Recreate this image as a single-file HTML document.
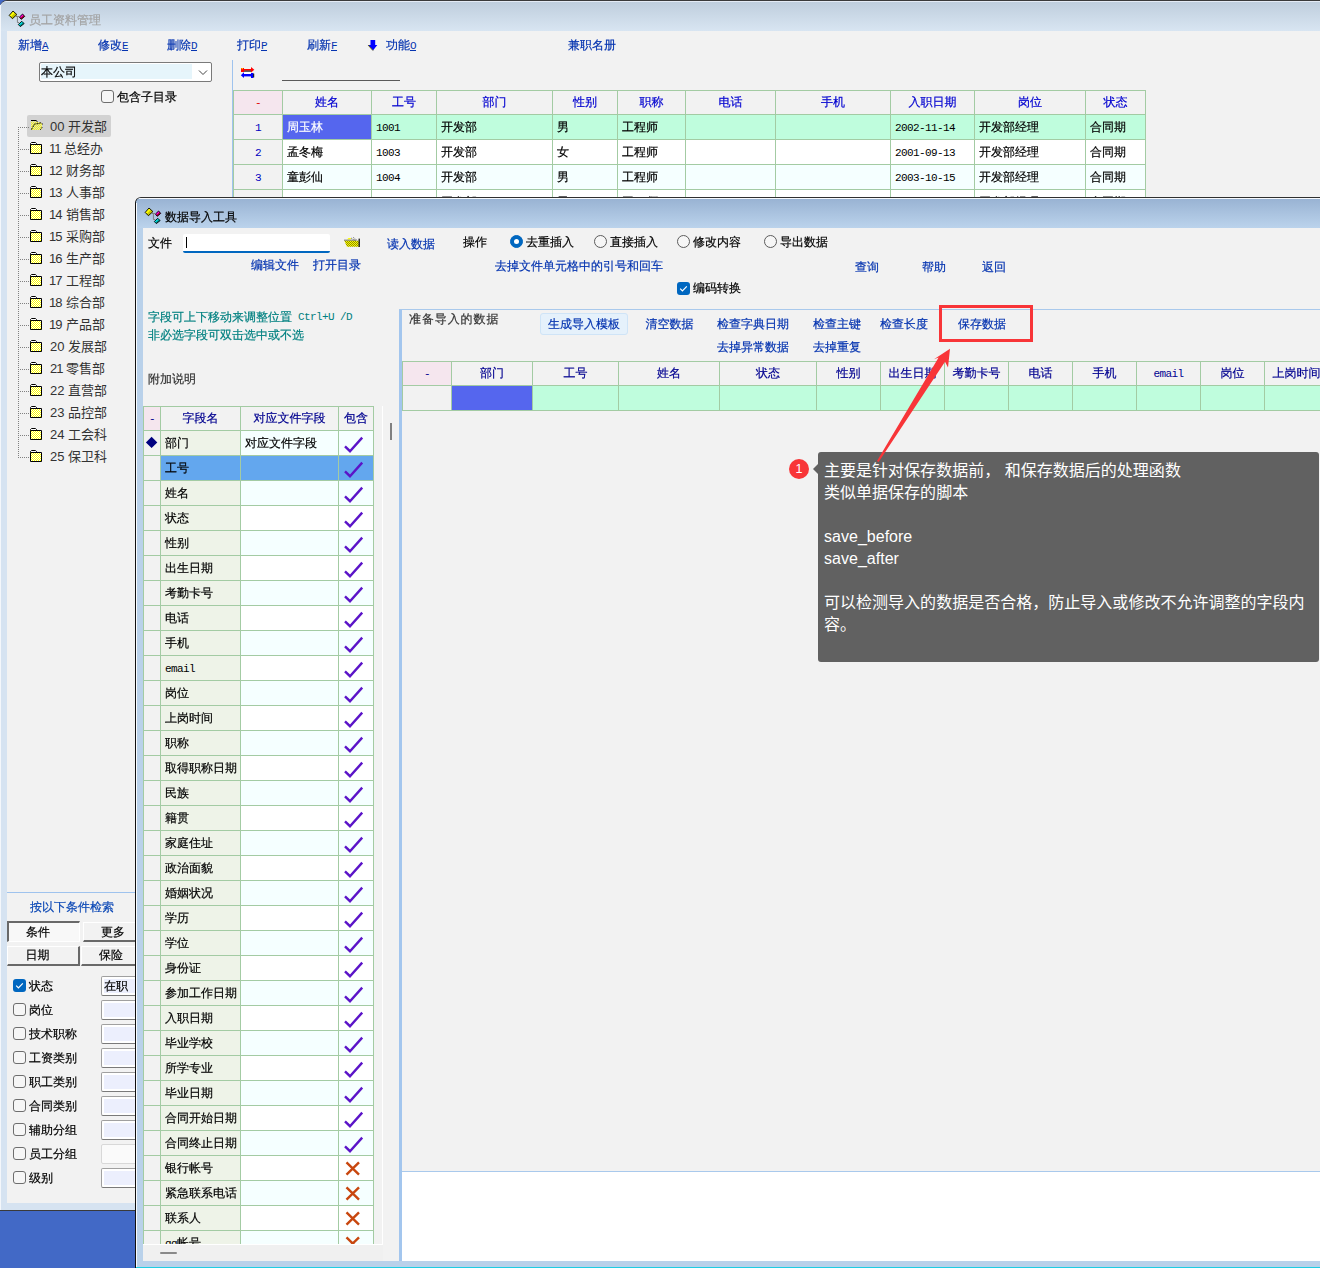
<!DOCTYPE html>
<html lang="zh-CN"><head><meta charset="utf-8"><title>员工资料管理</title>
<style>
html,body{margin:0;padding:0}
body{width:1320px;height:1268px;overflow:hidden;position:relative;background:#4269c6;font:12px/14px 'Liberation Sans','WenQuanYi Zen Hei',sans-serif;color:#000}
.b{position:absolute;box-sizing:border-box}
.t{position:absolute;white-space:nowrap;font:12px/14px 'Liberation Sans','WenQuanYi Zen Hei',sans-serif;-webkit-text-stroke:.2px}
.y{position:absolute;white-space:nowrap;font:13px/16px 'Liberation Sans','Noto Sans CJK SC',sans-serif;color:#333}
.n{position:absolute;white-space:nowrap;font:12px/14px 'Liberation Sans','Noto Sans CJK SC',sans-serif}
.o{margin-left:-1px;letter-spacing:-1px}
u{text-decoration:underline}
i{font:normal 11px 'Liberation Mono',monospace;letter-spacing:-.6px;position:relative;top:-.5px;-webkit-text-stroke:0}
.g{position:absolute;box-sizing:border-box;border-right:1px solid #a3cba3;border-bottom:1px solid #a3cba3;white-space:nowrap;overflow:hidden;font:12px/14px 'Liberation Sans','WenQuanYi Zen Hei',sans-serif;-webkit-text-stroke:.2px}
.g span{position:absolute;left:4px;top:5px}
.g.c{text-align:center}
.g.c span{position:static;display:block;margin-top:4px}
.cb{position:absolute;box-sizing:border-box;width:13px;height:13px;border:1px solid #6e6e6e;border-radius:3px;background:#f6f6f6}
.cbk{position:absolute;box-sizing:border-box;width:13px;height:13px;border-radius:3px;background:#0067c0}
.rd{position:absolute;box-sizing:border-box;width:13px;height:13px;border:1px solid #5c5c5c;border-radius:50%;background:#f6f6f6}
.inp{position:absolute;box-sizing:border-box;height:20px;border:1px solid #a0a0a0;border-bottom-color:#7a7a7a;border-radius:2px;background:#fff}
.inp b{position:absolute;left:2px;top:2px;right:0;bottom:2px;background:#eceffd}
</style></head><body>

<div class="b" id="win1" style="left:0;top:0;width:1400px;height:1211px;background:#d6e3f1;border-top:1px solid #3a3a3a;border-bottom:1px solid #3a3a3a;border-top-left-radius:7px"></div>
<div class="b" style="left:1px;top:1px;width:1400px;height:30px;background:linear-gradient(#e4ebf5 0,#e4ebf5 1px,#bfcedd 1px,#d8e5f2 100%);border-top-left-radius:6px"></div>
<div class="b" style="left:0px;top:5px;width:1px;height:1205px;background:#f4f7fb"></div>
<div class="b" id="client1" style="left:7px;top:31px;width:1400px;height:1172px;background:#f2f2f2"></div>
<svg class="b" style="left:8px;top:10px" width="18" height="18" viewBox="0 0 18 18"><path d="M8 6.5H11.4M9.4 6.5V12.5H11" fill="none" stroke="#808080" stroke-width="1"/><path d="M5 1L8.9 4.6L4.4 8.7L1.2 5.4Z" fill="#ffff00"/><path d="M6.95 2.8L8.9 4.6L4.4 8.7L2.8 7.05Z" fill="#c4c400"/><path d="M5 1L8.9 4.6L4.4 8.7L1.2 5.4Z" fill="none" stroke="#000" stroke-width=".9"/><path d="M14.6 4L16.7 6.4L13.2 9.3L11.5 7Z" fill="#ff00e0"/><path d="M15.65 5.2L16.7 6.4L13.2 9.3L12.35 8.15Z" fill="#b00020"/><path d="M14.6 4L16.7 6.4L13.2 9.3L11.5 7Z" fill="none" stroke="#000" stroke-width=".9"/><path d="M13.8 11.3L16.1 13.6L12.3 16.6L10.3 14.5Z" fill="#00e8e8"/><path d="M14.95 12.45L16.1 13.6L12.3 16.6L11.3 15.55Z" fill="#008888"/><path d="M13.8 11.3L16.1 13.6L12.3 16.6L10.3 14.5Z" fill="none" stroke="#000" stroke-width=".9"/></svg>
<div class="t" style="left:29px;top:12.5px;color:#a3a3a3;">员工资料管理</div>
<div class="t" style="left:18px;top:38px;color:#0534b0;">新增<u><i>A</i></u></div>
<div class="t" style="left:98px;top:38px;color:#0534b0;">修改<u><i>E</i></u></div>
<div class="t" style="left:167px;top:38px;color:#0534b0;">删除<u><i>D</i></u></div>
<div class="t" style="left:237px;top:38px;color:#0534b0;">打印<u><i>P</i></u></div>
<div class="t" style="left:307px;top:38px;color:#0534b0;">刷新<u><i>F</i></u></div>
<div class="t" style="left:386px;top:38px;color:#0534b0;">功能<u><i>O</i></u></div>
<div class="t" style="left:568px;top:38px;color:#0534b0;">兼职名册</div>
<svg class="b" style="left:367px;top:39px" width="12" height="13" viewBox="0 0 12 13"><path d="M3.5 1H8.2V6H10.3L6 11.6L1 6H3.5Z" fill="#0000ff"/><path d="M1 6L6 11.6" stroke="#60601a" stroke-width="1" fill="none"/></svg>
<div class="b" style="left:39px;top:62px;width:173px;height:20px;background:#fff;border:1px solid #7a7a7a;border-radius:2px"></div>
<div class="b" style="left:41px;top:64px;width:151px;height:15px;background:#e6f5fb"></div>
<div class="t" style="left:41px;top:64.5px;color:#000;">本公司</div>
<svg class="b" style="left:198px;top:69px" width="10" height="7" viewBox="0 0 10 7"><path d="M1 1.5L5 5.5L9 1.5" fill="none" stroke="#444" stroke-width="1"/></svg>
<div class="cb" style="left:101px;top:90px"></div>
<div class="t" style="left:117px;top:90px;color:#000;">包含子目录</div>
<div class="b" style="left:232px;top:60px;width:1px;height:1143px;background:#9fc3ee"></div>
<svg class="b" style="left:240px;top:66px" width="16" height="13" viewBox="0 0 16 13"><rect x="1" y="2" width="3" height="4" fill="#f00"/><rect x="1.6" y="2" width="1.2" height="1.2" fill="#ff0"/><rect x="4" y="3" width="7" height="1.6" fill="#f00"/><rect x="4" y="4.6" width="7" height="1" fill="#000"/><path d="M11 1L14.3 3.8L11 6.5Z" fill="#f00"/><path d="M4 6.3L.8 9.2L4 12Z" fill="#00f"/><rect x="4" y="8" width="7" height="2.4" fill="#00f"/><rect x="11" y="7" width="2.4" height="5" fill="#00f"/><rect x="13.2" y="7.6" width="1" height="3.8" fill="#000"/><rect x="4.2" y="6.2" width="6.6" height="1.7" fill="#fff"/></svg>
<div class="b" style="left:282px;top:80px;width:118px;height:1px;background:#5a5a5a"></div>
<div class="b" style="left:233px;top:90px;width:913px;height:120px;background:#a3cba3"></div>
<div class="g c" style="left:234px;top:91px;width:49px;height:24px;background:#f5e6ee;color:#e00000"><span><i>-</i></span></div>
<div class="g c" style="left:283px;top:91px;width:89px;height:24px;background:#f2f2f2;color:#0000d0"><span>姓名</span></div>
<div class="g c" style="left:372px;top:91px;width:65px;height:24px;background:#f2f2f2;color:#0000d0"><span>工号</span></div>
<div class="g c" style="left:437px;top:91px;width:116px;height:24px;background:#f2f2f2;color:#0000d0"><span>部门</span></div>
<div class="g c" style="left:553px;top:91px;width:65px;height:24px;background:#f2f2f2;color:#0000d0"><span>性别</span></div>
<div class="g c" style="left:618px;top:91px;width:68px;height:24px;background:#f2f2f2;color:#0000d0"><span>职称</span></div>
<div class="g c" style="left:686px;top:91px;width:90px;height:24px;background:#f2f2f2;color:#0000d0"><span>电话</span></div>
<div class="g c" style="left:776px;top:91px;width:115px;height:24px;background:#f2f2f2;color:#0000d0"><span>手机</span></div>
<div class="g c" style="left:891px;top:91px;width:84px;height:24px;background:#f2f2f2;color:#0000d0"><span>入职日期</span></div>
<div class="g c" style="left:975px;top:91px;width:111px;height:24px;background:#f2f2f2;color:#0000d0"><span>岗位</span></div>
<div class="g c" style="left:1086px;top:91px;width:60px;height:24px;background:#f2f2f2;color:#0000d0"><span>状态</span></div>
<div class="g c" style="left:234px;top:115px;width:49px;height:25px;background:#f2f2f2;color:#0000c0"><span style="margin-top:5px"><i>1</i></span></div>
<div class="g" style="left:283px;top:115px;width:89px;height:25px;background:#5566ee;color:#fff"><span>周玉林</span></div>
<div class="g" style="left:372px;top:115px;width:65px;height:25px;background:#bffddd;color:#000"><span><i>1001</i></span></div>
<div class="g" style="left:437px;top:115px;width:116px;height:25px;background:#bffddd;color:#000"><span>开发部</span></div>
<div class="g" style="left:553px;top:115px;width:65px;height:25px;background:#bffddd;color:#000"><span>男</span></div>
<div class="g" style="left:618px;top:115px;width:68px;height:25px;background:#bffddd;color:#000"><span>工程师</span></div>
<div class="g" style="left:686px;top:115px;width:90px;height:25px;background:#bffddd;color:#000"><span></span></div>
<div class="g" style="left:776px;top:115px;width:115px;height:25px;background:#bffddd;color:#000"><span></span></div>
<div class="g" style="left:891px;top:115px;width:84px;height:25px;background:#bffddd;color:#000"><span><i>2002-11-14</i></span></div>
<div class="g" style="left:975px;top:115px;width:111px;height:25px;background:#bffddd;color:#000"><span>开发部经理</span></div>
<div class="g" style="left:1086px;top:115px;width:60px;height:25px;background:#bffddd;color:#000"><span>合同期</span></div>
<div class="g c" style="left:234px;top:140px;width:49px;height:25px;background:#f2f2f2;color:#0000c0"><span style="margin-top:5px"><i>2</i></span></div>
<div class="g" style="left:283px;top:140px;width:89px;height:25px;background:#fff;color:#000"><span>孟冬梅</span></div>
<div class="g" style="left:372px;top:140px;width:65px;height:25px;background:#fff;color:#000"><span><i>1003</i></span></div>
<div class="g" style="left:437px;top:140px;width:116px;height:25px;background:#fff;color:#000"><span>开发部</span></div>
<div class="g" style="left:553px;top:140px;width:65px;height:25px;background:#fff;color:#000"><span>女</span></div>
<div class="g" style="left:618px;top:140px;width:68px;height:25px;background:#fff;color:#000"><span>工程师</span></div>
<div class="g" style="left:686px;top:140px;width:90px;height:25px;background:#fff;color:#000"><span></span></div>
<div class="g" style="left:776px;top:140px;width:115px;height:25px;background:#fff;color:#000"><span></span></div>
<div class="g" style="left:891px;top:140px;width:84px;height:25px;background:#fff;color:#000"><span><i>2001-09-13</i></span></div>
<div class="g" style="left:975px;top:140px;width:111px;height:25px;background:#fff;color:#000"><span>开发部经理</span></div>
<div class="g" style="left:1086px;top:140px;width:60px;height:25px;background:#fff;color:#000"><span>合同期</span></div>
<div class="g c" style="left:234px;top:165px;width:49px;height:25px;background:#f2f2f2;color:#0000c0"><span style="margin-top:5px"><i>3</i></span></div>
<div class="g" style="left:283px;top:165px;width:89px;height:25px;background:#f5ffff;color:#000"><span>童彭仙</span></div>
<div class="g" style="left:372px;top:165px;width:65px;height:25px;background:#f5ffff;color:#000"><span><i>1004</i></span></div>
<div class="g" style="left:437px;top:165px;width:116px;height:25px;background:#f5ffff;color:#000"><span>开发部</span></div>
<div class="g" style="left:553px;top:165px;width:65px;height:25px;background:#f5ffff;color:#000"><span>男</span></div>
<div class="g" style="left:618px;top:165px;width:68px;height:25px;background:#f5ffff;color:#000"><span>工程师</span></div>
<div class="g" style="left:686px;top:165px;width:90px;height:25px;background:#f5ffff;color:#000"><span></span></div>
<div class="g" style="left:776px;top:165px;width:115px;height:25px;background:#f5ffff;color:#000"><span></span></div>
<div class="g" style="left:891px;top:165px;width:84px;height:25px;background:#f5ffff;color:#000"><span><i>2003-10-15</i></span></div>
<div class="g" style="left:975px;top:165px;width:111px;height:25px;background:#f5ffff;color:#000"><span>开发部经理</span></div>
<div class="g" style="left:1086px;top:165px;width:60px;height:25px;background:#f5ffff;color:#000"><span>合同期</span></div>
<div class="g c" style="left:234px;top:190px;width:49px;height:25px;background:#f2f2f2;color:#0000c0"><span style="margin-top:5px"></span></div>
<div class="g" style="left:283px;top:190px;width:89px;height:25px;background:#fff;color:#000"><span></span></div>
<div class="g" style="left:372px;top:190px;width:65px;height:25px;background:#fff;color:#000"><span></span></div>
<div class="g" style="left:437px;top:190px;width:116px;height:25px;background:#fff;color:#000"><span>开发部</span></div>
<div class="g" style="left:553px;top:190px;width:65px;height:25px;background:#fff;color:#000"><span>男</span></div>
<div class="g" style="left:618px;top:190px;width:68px;height:25px;background:#fff;color:#000"><span>工程师</span></div>
<div class="g" style="left:686px;top:190px;width:90px;height:25px;background:#fff;color:#000"><span></span></div>
<div class="g" style="left:776px;top:190px;width:115px;height:25px;background:#fff;color:#000"><span></span></div>
<div class="g" style="left:891px;top:190px;width:84px;height:25px;background:#fff;color:#000"><span></span></div>
<div class="g" style="left:975px;top:190px;width:111px;height:25px;background:#fff;color:#000"><span>开发部经理</span></div>
<div class="g" style="left:1086px;top:190px;width:60px;height:25px;background:#fff;color:#000"><span>合同期</span></div>
<svg class="b" width="0" height="0" style="left:0;top:0"><defs><pattern id="dy" width="2" height="2" patternUnits="userSpaceOnUse"><rect width="2" height="2" fill="#fff"/><rect width="1" height="1" fill="#ff0"/><rect x="1" y="1" width="1" height="1" fill="#ff0"/></pattern><pattern id="dg" width="2" height="2" patternUnits="userSpaceOnUse"><rect width="1" height="1" fill="#ff0"/><rect x="1" y="1" width="1" height="1" fill="#ff0"/></pattern></defs></svg>
<div class="b" style="left:27px;top:115px;width:84px;height:22px;background:#d2d2d2;border-radius:2px"></div>
<div class="b" style="left:18px;top:127px;width:1px;height:331px;border-left:1px dotted #808080"></div>
<div class="b" style="left:20px;top:127px;width:9px;height:1px;border-top:1px dotted #808080"></div>
<svg class="b" style="left:30px;top:119px" width="14" height="12" viewBox="0 0 14 12"><path d="M1 2.5H7L12 4V11H1Z" fill="url(#dg)"/><path d="M1 1.5H6L7.6 2.8" fill="none" stroke="#000" stroke-width="1"/><path d="M1.4 10.6L4.5 5L8.5 4.6L10.5 3.8L12.8 5.2" fill="none" stroke="#000" stroke-width="1" stroke-dasharray="2 .8"/><path d="M12.2 8.2L10.4 10.7" fill="none" stroke="#000" stroke-width="1" stroke-dasharray="1.2 .8"/></svg>
<div class="y" style="left:50px;top:119px">00 开发部</div>
<div class="b" style="left:20px;top:149px;width:9px;height:1px;border-top:1px dotted #808080"></div>
<svg class="b" style="left:30px;top:142px" width="12" height="12" viewBox="0 0 12 12"><path d="M.5 2.5V1.5L1.5 .5H5.5L6.5 1.5V2.5" fill="#fff" stroke="#000" stroke-width="1"/><path d="M.5 2.5H11.5V11.5H.5Z" fill="url(#dy)" stroke="#000" stroke-width="1"/></svg>
<div class="y" style="left:50px;top:141px"><span class="o">1</span><span class="o">1</span> 总经办</div>
<div class="b" style="left:20px;top:171px;width:9px;height:1px;border-top:1px dotted #808080"></div>
<svg class="b" style="left:30px;top:164px" width="12" height="12" viewBox="0 0 12 12"><path d="M.5 2.5V1.5L1.5 .5H5.5L6.5 1.5V2.5" fill="#fff" stroke="#000" stroke-width="1"/><path d="M.5 2.5H11.5V11.5H.5Z" fill="url(#dy)" stroke="#000" stroke-width="1"/></svg>
<div class="y" style="left:50px;top:163px"><span class="o">1</span>2 财务部</div>
<div class="b" style="left:20px;top:193px;width:9px;height:1px;border-top:1px dotted #808080"></div>
<svg class="b" style="left:30px;top:186px" width="12" height="12" viewBox="0 0 12 12"><path d="M.5 2.5V1.5L1.5 .5H5.5L6.5 1.5V2.5" fill="#fff" stroke="#000" stroke-width="1"/><path d="M.5 2.5H11.5V11.5H.5Z" fill="url(#dy)" stroke="#000" stroke-width="1"/></svg>
<div class="y" style="left:50px;top:185px"><span class="o">1</span>3 人事部</div>
<div class="b" style="left:20px;top:215px;width:9px;height:1px;border-top:1px dotted #808080"></div>
<svg class="b" style="left:30px;top:208px" width="12" height="12" viewBox="0 0 12 12"><path d="M.5 2.5V1.5L1.5 .5H5.5L6.5 1.5V2.5" fill="#fff" stroke="#000" stroke-width="1"/><path d="M.5 2.5H11.5V11.5H.5Z" fill="url(#dy)" stroke="#000" stroke-width="1"/></svg>
<div class="y" style="left:50px;top:207px"><span class="o">1</span>4 销售部</div>
<div class="b" style="left:20px;top:237px;width:9px;height:1px;border-top:1px dotted #808080"></div>
<svg class="b" style="left:30px;top:230px" width="12" height="12" viewBox="0 0 12 12"><path d="M.5 2.5V1.5L1.5 .5H5.5L6.5 1.5V2.5" fill="#fff" stroke="#000" stroke-width="1"/><path d="M.5 2.5H11.5V11.5H.5Z" fill="url(#dy)" stroke="#000" stroke-width="1"/></svg>
<div class="y" style="left:50px;top:229px"><span class="o">1</span>5 采购部</div>
<div class="b" style="left:20px;top:259px;width:9px;height:1px;border-top:1px dotted #808080"></div>
<svg class="b" style="left:30px;top:252px" width="12" height="12" viewBox="0 0 12 12"><path d="M.5 2.5V1.5L1.5 .5H5.5L6.5 1.5V2.5" fill="#fff" stroke="#000" stroke-width="1"/><path d="M.5 2.5H11.5V11.5H.5Z" fill="url(#dy)" stroke="#000" stroke-width="1"/></svg>
<div class="y" style="left:50px;top:251px"><span class="o">1</span>6 生产部</div>
<div class="b" style="left:20px;top:281px;width:9px;height:1px;border-top:1px dotted #808080"></div>
<svg class="b" style="left:30px;top:274px" width="12" height="12" viewBox="0 0 12 12"><path d="M.5 2.5V1.5L1.5 .5H5.5L6.5 1.5V2.5" fill="#fff" stroke="#000" stroke-width="1"/><path d="M.5 2.5H11.5V11.5H.5Z" fill="url(#dy)" stroke="#000" stroke-width="1"/></svg>
<div class="y" style="left:50px;top:273px"><span class="o">1</span>7 工程部</div>
<div class="b" style="left:20px;top:303px;width:9px;height:1px;border-top:1px dotted #808080"></div>
<svg class="b" style="left:30px;top:296px" width="12" height="12" viewBox="0 0 12 12"><path d="M.5 2.5V1.5L1.5 .5H5.5L6.5 1.5V2.5" fill="#fff" stroke="#000" stroke-width="1"/><path d="M.5 2.5H11.5V11.5H.5Z" fill="url(#dy)" stroke="#000" stroke-width="1"/></svg>
<div class="y" style="left:50px;top:295px"><span class="o">1</span>8 综合部</div>
<div class="b" style="left:20px;top:325px;width:9px;height:1px;border-top:1px dotted #808080"></div>
<svg class="b" style="left:30px;top:318px" width="12" height="12" viewBox="0 0 12 12"><path d="M.5 2.5V1.5L1.5 .5H5.5L6.5 1.5V2.5" fill="#fff" stroke="#000" stroke-width="1"/><path d="M.5 2.5H11.5V11.5H.5Z" fill="url(#dy)" stroke="#000" stroke-width="1"/></svg>
<div class="y" style="left:50px;top:317px"><span class="o">1</span>9 产品部</div>
<div class="b" style="left:20px;top:347px;width:9px;height:1px;border-top:1px dotted #808080"></div>
<svg class="b" style="left:30px;top:340px" width="12" height="12" viewBox="0 0 12 12"><path d="M.5 2.5V1.5L1.5 .5H5.5L6.5 1.5V2.5" fill="#fff" stroke="#000" stroke-width="1"/><path d="M.5 2.5H11.5V11.5H.5Z" fill="url(#dy)" stroke="#000" stroke-width="1"/></svg>
<div class="y" style="left:50px;top:339px">20 发展部</div>
<div class="b" style="left:20px;top:369px;width:9px;height:1px;border-top:1px dotted #808080"></div>
<svg class="b" style="left:30px;top:362px" width="12" height="12" viewBox="0 0 12 12"><path d="M.5 2.5V1.5L1.5 .5H5.5L6.5 1.5V2.5" fill="#fff" stroke="#000" stroke-width="1"/><path d="M.5 2.5H11.5V11.5H.5Z" fill="url(#dy)" stroke="#000" stroke-width="1"/></svg>
<div class="y" style="left:50px;top:361px">2<span class="o">1</span> 零售部</div>
<div class="b" style="left:20px;top:391px;width:9px;height:1px;border-top:1px dotted #808080"></div>
<svg class="b" style="left:30px;top:384px" width="12" height="12" viewBox="0 0 12 12"><path d="M.5 2.5V1.5L1.5 .5H5.5L6.5 1.5V2.5" fill="#fff" stroke="#000" stroke-width="1"/><path d="M.5 2.5H11.5V11.5H.5Z" fill="url(#dy)" stroke="#000" stroke-width="1"/></svg>
<div class="y" style="left:50px;top:383px">22 直营部</div>
<div class="b" style="left:20px;top:413px;width:9px;height:1px;border-top:1px dotted #808080"></div>
<svg class="b" style="left:30px;top:406px" width="12" height="12" viewBox="0 0 12 12"><path d="M.5 2.5V1.5L1.5 .5H5.5L6.5 1.5V2.5" fill="#fff" stroke="#000" stroke-width="1"/><path d="M.5 2.5H11.5V11.5H.5Z" fill="url(#dy)" stroke="#000" stroke-width="1"/></svg>
<div class="y" style="left:50px;top:405px">23 品控部</div>
<div class="b" style="left:20px;top:435px;width:9px;height:1px;border-top:1px dotted #808080"></div>
<svg class="b" style="left:30px;top:428px" width="12" height="12" viewBox="0 0 12 12"><path d="M.5 2.5V1.5L1.5 .5H5.5L6.5 1.5V2.5" fill="#fff" stroke="#000" stroke-width="1"/><path d="M.5 2.5H11.5V11.5H.5Z" fill="url(#dy)" stroke="#000" stroke-width="1"/></svg>
<div class="y" style="left:50px;top:427px">24 工会科</div>
<div class="b" style="left:20px;top:457px;width:9px;height:1px;border-top:1px dotted #808080"></div>
<svg class="b" style="left:30px;top:450px" width="12" height="12" viewBox="0 0 12 12"><path d="M.5 2.5V1.5L1.5 .5H5.5L6.5 1.5V2.5" fill="#fff" stroke="#000" stroke-width="1"/><path d="M.5 2.5H11.5V11.5H.5Z" fill="url(#dy)" stroke="#000" stroke-width="1"/></svg>
<div class="y" style="left:50px;top:449px">25 保卫科</div>
<div class="b" style="left:7px;top:892px;width:128px;height:1px;background:#9fc3ee"></div>
<div class="t" style="left:30px;top:900px;color:#0a47b5;">按以下条件检索</div>
<div class="b" style="left:7px;top:921px;width:73px;height:21px;background:#f8f8f8;border:1px solid #696969;border-right-color:#fff;border-bottom-color:#fff;border-left-width:2px;border-top-width:2px"></div>
<div class="b" style="left:83px;top:922px;width:60px;height:20px;background:#f2f2f2;border:1px solid #fff;border-right-color:#696969;border-bottom:2px solid #696969"></div>
<div class="b" style="left:7px;top:946px;width:73px;height:20px;background:#f2f2f2;border:1px solid #fff;border-right:2px solid #696969;border-bottom:2px solid #696969"></div>
<div class="b" style="left:81px;top:946px;width:62px;height:20px;background:#f2f2f2;border:1px solid #fff;border-right-color:#696969;border-bottom:2px solid #696969"></div>
<div class="t" style="left:26px;top:925px;color:#000;">条件</div>
<div class="t" style="left:101px;top:925px;color:#000;">更多</div>
<div class="t" style="left:25.5px;top:947.5px;color:#000;">日期</div>
<div class="t" style="left:99px;top:947.5px;color:#000;">保险</div>
<div class="cbk" style="left:13px;top:979px"><svg width="13" height="13" viewBox="0 0 13 13" style="display:block"><path d="M3.2 6.7L5.4 8.9L9.8 4.4" fill="none" stroke="#fff" stroke-width="1.2"/></svg></div>
<div class="t" style="left:29px;top:978.5px;color:#000;">状态</div>
<div class="inp" style="left:101px;top:975.5px;width:60px"><b></b></div>
<div class="t" style="left:104px;top:978.5px;color:#000;">在职</div>
<div class="cb" style="left:13px;top:1003px"></div>
<div class="t" style="left:29px;top:1002.5px;color:#000;">岗位</div>
<div class="inp" style="left:101px;top:999.5px;width:60px"><b></b></div>
<div class="cb" style="left:13px;top:1027px"></div>
<div class="t" style="left:29px;top:1026.5px;color:#000;">技术职称</div>
<div class="inp" style="left:101px;top:1023.5px;width:60px"><b></b></div>
<div class="cb" style="left:13px;top:1051px"></div>
<div class="t" style="left:29px;top:1050.5px;color:#000;">工资类别</div>
<div class="inp" style="left:101px;top:1047.5px;width:60px"><b></b></div>
<div class="cb" style="left:13px;top:1075px"></div>
<div class="t" style="left:29px;top:1074.5px;color:#000;">职工类别</div>
<div class="inp" style="left:101px;top:1071.5px;width:60px"><b></b></div>
<div class="cb" style="left:13px;top:1099px"></div>
<div class="t" style="left:29px;top:1098.5px;color:#000;">合同类别</div>
<div class="inp" style="left:101px;top:1095.5px;width:60px"><b></b></div>
<div class="cb" style="left:13px;top:1123px"></div>
<div class="t" style="left:29px;top:1122.5px;color:#000;">辅助分组</div>
<div class="inp" style="left:101px;top:1119.5px;width:60px"><b></b></div>
<div class="cb" style="left:13px;top:1147px"></div>
<div class="t" style="left:29px;top:1146.5px;color:#000;">员工分组</div>
<div class="inp" style="left:101px;top:1143.5px;width:60px;border-color:#d8d8d8;background:#fafafa"></div>
<div class="cb" style="left:13px;top:1171px"></div>
<div class="t" style="left:29px;top:1170.5px;color:#000;">级别</div>
<div class="inp" style="left:101px;top:1167.5px;width:60px"><b></b></div>
<div class="b" id="dlg" style="left:135px;top:197px;width:1300px;height:1080px;background:#b9d1ea;border-top:1px solid #303030;border-left:1px solid #101010;border-top-left-radius:6px"></div>
<div class="b" style="left:136px;top:198px;width:1300px;height:30px;background:linear-gradient(#f6f9fd 0,#f6f9fd 1px,#99b3d3 1px,#bbd3ec 100%);border-top-left-radius:5px"></div>
<div class="b" id="client2" style="left:143px;top:228px;width:1300px;height:1033px;background:#f2f2f2"></div>
<div class="b" style="left:136px;top:1267px;width:1300px;height:1px;background:#1fcde3"></div>
<div class="b" style="left:136px;top:203px;width:1px;height:1064px;background:#f8fbfe"></div>
<svg class="b" style="left:144px;top:207px" width="18" height="18" viewBox="0 0 18 18"><path d="M8 6.5H11.4M9.4 6.5V12.5H11" fill="none" stroke="#808080" stroke-width="1"/><path d="M5 1L8.9 4.6L4.4 8.7L1.2 5.4Z" fill="#ffff00"/><path d="M6.95 2.8L8.9 4.6L4.4 8.7L2.8 7.05Z" fill="#c4c400"/><path d="M5 1L8.9 4.6L4.4 8.7L1.2 5.4Z" fill="none" stroke="#000" stroke-width=".9"/><path d="M14.6 4L16.7 6.4L13.2 9.3L11.5 7Z" fill="#ff00e0"/><path d="M15.65 5.2L16.7 6.4L13.2 9.3L12.35 8.15Z" fill="#b00020"/><path d="M14.6 4L16.7 6.4L13.2 9.3L11.5 7Z" fill="none" stroke="#000" stroke-width=".9"/><path d="M13.8 11.3L16.1 13.6L12.3 16.6L10.3 14.5Z" fill="#00e8e8"/><path d="M14.95 12.45L16.1 13.6L12.3 16.6L11.3 15.55Z" fill="#008888"/><path d="M13.8 11.3L16.1 13.6L12.3 16.6L10.3 14.5Z" fill="none" stroke="#000" stroke-width=".9"/></svg>
<div class="t" style="left:165px;top:210px;color:#000;">数据导入工具</div>
<div class="t" style="left:148px;top:236px;color:#000;">文件</div>
<div class="b" style="left:183px;top:234px;width:147px;height:19px;background:#fff;border-bottom:2px solid #0067c0;border-radius:2px"></div>
<div class="b" style="left:186px;top:237px;width:1px;height:11px;background:#000"></div>
<svg class="b" style="left:343px;top:236px" width="18" height="12" viewBox="0 0 18 12"><path d="M4 3.5L5.5 2H8.5L7 3.5Z" fill="#ffff00"/><path d="M1 4.2H13" stroke="#666" stroke-width="1"/><defs><pattern id="dz" width="2" height="2" patternUnits="userSpaceOnUse"><rect width="2" height="2" fill="#8a8a00"/><rect width="1" height="1" fill="#ff0"/><rect x="1" y="1" width="1" height="1" fill="#ff0"/></pattern></defs><path d="M1.3 4.7H15.8V10.8H4Z" fill="url(#dz)"/><path d="M8 2L12.5 4.5M10 1.2L15 5" stroke="#555" stroke-width=".8" stroke-dasharray="1 1"/><rect x="15.6" y="2.6" width="1.2" height="8.4" fill="#000"/></svg>
<div class="t" style="left:387px;top:237px;color:#0534b0;">读入数据</div>
<div class="t" style="left:463px;top:235px;color:#000;">操作</div>
<div class="rd" style="left:510px;top:235px;background:#0067c0;border-color:#0067c0"><div class="b" style="left:3px;top:3px;width:5px;height:5px;border-radius:50%;background:#fff"></div></div>
<div class="t" style="left:526px;top:235px;color:#000;">去重插入</div>
<div class="rd" style="left:594px;top:235px"></div>
<div class="t" style="left:610px;top:235px;color:#000;">直接插入</div>
<div class="rd" style="left:677px;top:235px"></div>
<div class="t" style="left:693px;top:235px;color:#000;">修改内容</div>
<div class="rd" style="left:764px;top:235px"></div>
<div class="t" style="left:780px;top:235px;color:#000;">导出数据</div>
<div class="t" style="left:251px;top:258px;color:#0534b0;">编辑文件</div>
<div class="t" style="left:313px;top:258px;color:#0534b0;">打开目录</div>
<div class="t" style="left:495px;top:259px;color:#0534b0;">去掉文件单元格中的引号和回车</div>
<div class="t" style="left:855px;top:260px;color:#0534b0;">查询</div>
<div class="t" style="left:922px;top:260px;color:#0534b0;">帮助</div>
<div class="t" style="left:982px;top:260px;color:#0534b0;">返回</div>
<div class="cbk" style="left:677px;top:282px"><svg width="13" height="13" viewBox="0 0 13 13" style="display:block"><path d="M3.2 6.7L5.4 8.9L9.8 4.4" fill="none" stroke="#fff" stroke-width="1.2"/></svg></div>
<div class="t" style="left:693px;top:281px;color:#000;">编码转换</div>
<div class="t" style="left:148px;top:309.5px;color:#008080;">字段可上下移动来调整位置<i>&nbsp;Ctrl+U /D</i></div>
<div class="t" style="left:148px;top:327.5px;color:#008080;">非必选字段可双击选中或不选</div>
<div class="t" style="left:148px;top:372px;color:#333;">附加说明</div>
<div class="b" id="ltab" style="left:143px;top:406px;width:231px;height:838px;overflow:hidden;background:#a3cba3">
<div class="g c" style="left:1px;top:1px;width:17px;height:24px;background:#f5e6ee;color:#000090"><span><i>-</i></span></div>
<div class="g c" style="left:18px;top:1px;width:80px;height:24px;background:#f2f2f2;color:#000090"><span>字段名</span></div>
<div class="g c" style="left:98px;top:1px;width:98px;height:24px;background:#f2f2f2;color:#000090"><span>对应文件字段</span></div>
<div class="g c" style="left:196px;top:1px;width:35px;height:24px;background:#f2f2f2;color:#000090"><span>包含</span></div>
<div class="g" style="left:1px;top:25px;width:17px;height:25px;background:#f2f2f2"><svg width="16" height="24" viewBox="0 0 16 24" style="position:absolute;left:0;top:0"><path d="M7.6 5.7L13.3 11.4L7.6 17.1L1.9 11.4Z" fill="#000080"/></svg></div>
<div class="g" style="left:18px;top:25px;width:80px;height:25px;background:#eef3e8"><span>部门</span></div>
<div class="g" style="left:98px;top:25px;width:98px;height:25px;background:#f5ffff"><span>对应文件字段</span></div>
<div class="g" style="left:196px;top:25px;width:35px;height:25px;background:#f5ffff"><svg width="34" height="24" viewBox="0 0 34 24" style="position:absolute;left:0;top:0"><path d="M6 15.3L11 20.2L23.2 6.6" fill="none" stroke="#5b14c8" stroke-width="2.4"/></svg></div>
<div class="g" style="left:1px;top:50px;width:17px;height:25px;background:#f2f2f2"></div>
<div class="g" style="left:18px;top:50px;width:80px;height:25px;background:#63a7ee"><span>工号</span></div>
<div class="g" style="left:98px;top:50px;width:98px;height:25px;background:#63a7ee"><span></span></div>
<div class="g" style="left:196px;top:50px;width:35px;height:25px;background:#63a7ee"><svg width="34" height="24" viewBox="0 0 34 24" style="position:absolute;left:0;top:0"><path d="M6 15.3L11 20.2L23.2 6.6" fill="none" stroke="#5b14c8" stroke-width="2.4"/></svg></div>
<div class="g" style="left:1px;top:75px;width:17px;height:25px;background:#f2f2f2"></div>
<div class="g" style="left:18px;top:75px;width:80px;height:25px;background:#eef3e8"><span>姓名</span></div>
<div class="g" style="left:98px;top:75px;width:98px;height:25px;background:#f5ffff"><span></span></div>
<div class="g" style="left:196px;top:75px;width:35px;height:25px;background:#f5ffff"><svg width="34" height="24" viewBox="0 0 34 24" style="position:absolute;left:0;top:0"><path d="M6 15.3L11 20.2L23.2 6.6" fill="none" stroke="#5b14c8" stroke-width="2.4"/></svg></div>
<div class="g" style="left:1px;top:100px;width:17px;height:25px;background:#f2f2f2"></div>
<div class="g" style="left:18px;top:100px;width:80px;height:25px;background:#eef3e8"><span>状态</span></div>
<div class="g" style="left:98px;top:100px;width:98px;height:25px;background:#fff"><span></span></div>
<div class="g" style="left:196px;top:100px;width:35px;height:25px;background:#fff"><svg width="34" height="24" viewBox="0 0 34 24" style="position:absolute;left:0;top:0"><path d="M6 15.3L11 20.2L23.2 6.6" fill="none" stroke="#5b14c8" stroke-width="2.4"/></svg></div>
<div class="g" style="left:1px;top:125px;width:17px;height:25px;background:#f2f2f2"></div>
<div class="g" style="left:18px;top:125px;width:80px;height:25px;background:#eef3e8"><span>性别</span></div>
<div class="g" style="left:98px;top:125px;width:98px;height:25px;background:#f5ffff"><span></span></div>
<div class="g" style="left:196px;top:125px;width:35px;height:25px;background:#f5ffff"><svg width="34" height="24" viewBox="0 0 34 24" style="position:absolute;left:0;top:0"><path d="M6 15.3L11 20.2L23.2 6.6" fill="none" stroke="#5b14c8" stroke-width="2.4"/></svg></div>
<div class="g" style="left:1px;top:150px;width:17px;height:25px;background:#f2f2f2"></div>
<div class="g" style="left:18px;top:150px;width:80px;height:25px;background:#eef3e8"><span>出生日期</span></div>
<div class="g" style="left:98px;top:150px;width:98px;height:25px;background:#fff"><span></span></div>
<div class="g" style="left:196px;top:150px;width:35px;height:25px;background:#fff"><svg width="34" height="24" viewBox="0 0 34 24" style="position:absolute;left:0;top:0"><path d="M6 15.3L11 20.2L23.2 6.6" fill="none" stroke="#5b14c8" stroke-width="2.4"/></svg></div>
<div class="g" style="left:1px;top:175px;width:17px;height:25px;background:#f2f2f2"></div>
<div class="g" style="left:18px;top:175px;width:80px;height:25px;background:#eef3e8"><span>考勤卡号</span></div>
<div class="g" style="left:98px;top:175px;width:98px;height:25px;background:#f5ffff"><span></span></div>
<div class="g" style="left:196px;top:175px;width:35px;height:25px;background:#f5ffff"><svg width="34" height="24" viewBox="0 0 34 24" style="position:absolute;left:0;top:0"><path d="M6 15.3L11 20.2L23.2 6.6" fill="none" stroke="#5b14c8" stroke-width="2.4"/></svg></div>
<div class="g" style="left:1px;top:200px;width:17px;height:25px;background:#f2f2f2"></div>
<div class="g" style="left:18px;top:200px;width:80px;height:25px;background:#eef3e8"><span>电话</span></div>
<div class="g" style="left:98px;top:200px;width:98px;height:25px;background:#fff"><span></span></div>
<div class="g" style="left:196px;top:200px;width:35px;height:25px;background:#fff"><svg width="34" height="24" viewBox="0 0 34 24" style="position:absolute;left:0;top:0"><path d="M6 15.3L11 20.2L23.2 6.6" fill="none" stroke="#5b14c8" stroke-width="2.4"/></svg></div>
<div class="g" style="left:1px;top:225px;width:17px;height:25px;background:#f2f2f2"></div>
<div class="g" style="left:18px;top:225px;width:80px;height:25px;background:#eef3e8"><span>手机</span></div>
<div class="g" style="left:98px;top:225px;width:98px;height:25px;background:#f5ffff"><span></span></div>
<div class="g" style="left:196px;top:225px;width:35px;height:25px;background:#f5ffff"><svg width="34" height="24" viewBox="0 0 34 24" style="position:absolute;left:0;top:0"><path d="M6 15.3L11 20.2L23.2 6.6" fill="none" stroke="#5b14c8" stroke-width="2.4"/></svg></div>
<div class="g" style="left:1px;top:250px;width:17px;height:25px;background:#f2f2f2"></div>
<div class="g" style="left:18px;top:250px;width:80px;height:25px;background:#eef3e8"><span><i>email</i></span></div>
<div class="g" style="left:98px;top:250px;width:98px;height:25px;background:#fff"><span></span></div>
<div class="g" style="left:196px;top:250px;width:35px;height:25px;background:#fff"><svg width="34" height="24" viewBox="0 0 34 24" style="position:absolute;left:0;top:0"><path d="M6 15.3L11 20.2L23.2 6.6" fill="none" stroke="#5b14c8" stroke-width="2.4"/></svg></div>
<div class="g" style="left:1px;top:275px;width:17px;height:25px;background:#f2f2f2"></div>
<div class="g" style="left:18px;top:275px;width:80px;height:25px;background:#eef3e8"><span>岗位</span></div>
<div class="g" style="left:98px;top:275px;width:98px;height:25px;background:#f5ffff"><span></span></div>
<div class="g" style="left:196px;top:275px;width:35px;height:25px;background:#f5ffff"><svg width="34" height="24" viewBox="0 0 34 24" style="position:absolute;left:0;top:0"><path d="M6 15.3L11 20.2L23.2 6.6" fill="none" stroke="#5b14c8" stroke-width="2.4"/></svg></div>
<div class="g" style="left:1px;top:300px;width:17px;height:25px;background:#f2f2f2"></div>
<div class="g" style="left:18px;top:300px;width:80px;height:25px;background:#eef3e8"><span>上岗时间</span></div>
<div class="g" style="left:98px;top:300px;width:98px;height:25px;background:#fff"><span></span></div>
<div class="g" style="left:196px;top:300px;width:35px;height:25px;background:#fff"><svg width="34" height="24" viewBox="0 0 34 24" style="position:absolute;left:0;top:0"><path d="M6 15.3L11 20.2L23.2 6.6" fill="none" stroke="#5b14c8" stroke-width="2.4"/></svg></div>
<div class="g" style="left:1px;top:325px;width:17px;height:25px;background:#f2f2f2"></div>
<div class="g" style="left:18px;top:325px;width:80px;height:25px;background:#eef3e8"><span>职称</span></div>
<div class="g" style="left:98px;top:325px;width:98px;height:25px;background:#f5ffff"><span></span></div>
<div class="g" style="left:196px;top:325px;width:35px;height:25px;background:#f5ffff"><svg width="34" height="24" viewBox="0 0 34 24" style="position:absolute;left:0;top:0"><path d="M6 15.3L11 20.2L23.2 6.6" fill="none" stroke="#5b14c8" stroke-width="2.4"/></svg></div>
<div class="g" style="left:1px;top:350px;width:17px;height:25px;background:#f2f2f2"></div>
<div class="g" style="left:18px;top:350px;width:80px;height:25px;background:#eef3e8"><span>取得职称日期</span></div>
<div class="g" style="left:98px;top:350px;width:98px;height:25px;background:#fff"><span></span></div>
<div class="g" style="left:196px;top:350px;width:35px;height:25px;background:#fff"><svg width="34" height="24" viewBox="0 0 34 24" style="position:absolute;left:0;top:0"><path d="M6 15.3L11 20.2L23.2 6.6" fill="none" stroke="#5b14c8" stroke-width="2.4"/></svg></div>
<div class="g" style="left:1px;top:375px;width:17px;height:25px;background:#f2f2f2"></div>
<div class="g" style="left:18px;top:375px;width:80px;height:25px;background:#eef3e8"><span>民族</span></div>
<div class="g" style="left:98px;top:375px;width:98px;height:25px;background:#f5ffff"><span></span></div>
<div class="g" style="left:196px;top:375px;width:35px;height:25px;background:#f5ffff"><svg width="34" height="24" viewBox="0 0 34 24" style="position:absolute;left:0;top:0"><path d="M6 15.3L11 20.2L23.2 6.6" fill="none" stroke="#5b14c8" stroke-width="2.4"/></svg></div>
<div class="g" style="left:1px;top:400px;width:17px;height:25px;background:#f2f2f2"></div>
<div class="g" style="left:18px;top:400px;width:80px;height:25px;background:#eef3e8"><span>籍贯</span></div>
<div class="g" style="left:98px;top:400px;width:98px;height:25px;background:#fff"><span></span></div>
<div class="g" style="left:196px;top:400px;width:35px;height:25px;background:#fff"><svg width="34" height="24" viewBox="0 0 34 24" style="position:absolute;left:0;top:0"><path d="M6 15.3L11 20.2L23.2 6.6" fill="none" stroke="#5b14c8" stroke-width="2.4"/></svg></div>
<div class="g" style="left:1px;top:425px;width:17px;height:25px;background:#f2f2f2"></div>
<div class="g" style="left:18px;top:425px;width:80px;height:25px;background:#eef3e8"><span>家庭住址</span></div>
<div class="g" style="left:98px;top:425px;width:98px;height:25px;background:#f5ffff"><span></span></div>
<div class="g" style="left:196px;top:425px;width:35px;height:25px;background:#f5ffff"><svg width="34" height="24" viewBox="0 0 34 24" style="position:absolute;left:0;top:0"><path d="M6 15.3L11 20.2L23.2 6.6" fill="none" stroke="#5b14c8" stroke-width="2.4"/></svg></div>
<div class="g" style="left:1px;top:450px;width:17px;height:25px;background:#f2f2f2"></div>
<div class="g" style="left:18px;top:450px;width:80px;height:25px;background:#eef3e8"><span>政治面貌</span></div>
<div class="g" style="left:98px;top:450px;width:98px;height:25px;background:#fff"><span></span></div>
<div class="g" style="left:196px;top:450px;width:35px;height:25px;background:#fff"><svg width="34" height="24" viewBox="0 0 34 24" style="position:absolute;left:0;top:0"><path d="M6 15.3L11 20.2L23.2 6.6" fill="none" stroke="#5b14c8" stroke-width="2.4"/></svg></div>
<div class="g" style="left:1px;top:475px;width:17px;height:25px;background:#f2f2f2"></div>
<div class="g" style="left:18px;top:475px;width:80px;height:25px;background:#eef3e8"><span>婚姻状况</span></div>
<div class="g" style="left:98px;top:475px;width:98px;height:25px;background:#f5ffff"><span></span></div>
<div class="g" style="left:196px;top:475px;width:35px;height:25px;background:#f5ffff"><svg width="34" height="24" viewBox="0 0 34 24" style="position:absolute;left:0;top:0"><path d="M6 15.3L11 20.2L23.2 6.6" fill="none" stroke="#5b14c8" stroke-width="2.4"/></svg></div>
<div class="g" style="left:1px;top:500px;width:17px;height:25px;background:#f2f2f2"></div>
<div class="g" style="left:18px;top:500px;width:80px;height:25px;background:#eef3e8"><span>学历</span></div>
<div class="g" style="left:98px;top:500px;width:98px;height:25px;background:#fff"><span></span></div>
<div class="g" style="left:196px;top:500px;width:35px;height:25px;background:#fff"><svg width="34" height="24" viewBox="0 0 34 24" style="position:absolute;left:0;top:0"><path d="M6 15.3L11 20.2L23.2 6.6" fill="none" stroke="#5b14c8" stroke-width="2.4"/></svg></div>
<div class="g" style="left:1px;top:525px;width:17px;height:25px;background:#f2f2f2"></div>
<div class="g" style="left:18px;top:525px;width:80px;height:25px;background:#eef3e8"><span>学位</span></div>
<div class="g" style="left:98px;top:525px;width:98px;height:25px;background:#f5ffff"><span></span></div>
<div class="g" style="left:196px;top:525px;width:35px;height:25px;background:#f5ffff"><svg width="34" height="24" viewBox="0 0 34 24" style="position:absolute;left:0;top:0"><path d="M6 15.3L11 20.2L23.2 6.6" fill="none" stroke="#5b14c8" stroke-width="2.4"/></svg></div>
<div class="g" style="left:1px;top:550px;width:17px;height:25px;background:#f2f2f2"></div>
<div class="g" style="left:18px;top:550px;width:80px;height:25px;background:#eef3e8"><span>身份证</span></div>
<div class="g" style="left:98px;top:550px;width:98px;height:25px;background:#fff"><span></span></div>
<div class="g" style="left:196px;top:550px;width:35px;height:25px;background:#fff"><svg width="34" height="24" viewBox="0 0 34 24" style="position:absolute;left:0;top:0"><path d="M6 15.3L11 20.2L23.2 6.6" fill="none" stroke="#5b14c8" stroke-width="2.4"/></svg></div>
<div class="g" style="left:1px;top:575px;width:17px;height:25px;background:#f2f2f2"></div>
<div class="g" style="left:18px;top:575px;width:80px;height:25px;background:#eef3e8"><span>参加工作日期</span></div>
<div class="g" style="left:98px;top:575px;width:98px;height:25px;background:#f5ffff"><span></span></div>
<div class="g" style="left:196px;top:575px;width:35px;height:25px;background:#f5ffff"><svg width="34" height="24" viewBox="0 0 34 24" style="position:absolute;left:0;top:0"><path d="M6 15.3L11 20.2L23.2 6.6" fill="none" stroke="#5b14c8" stroke-width="2.4"/></svg></div>
<div class="g" style="left:1px;top:600px;width:17px;height:25px;background:#f2f2f2"></div>
<div class="g" style="left:18px;top:600px;width:80px;height:25px;background:#eef3e8"><span>入职日期</span></div>
<div class="g" style="left:98px;top:600px;width:98px;height:25px;background:#fff"><span></span></div>
<div class="g" style="left:196px;top:600px;width:35px;height:25px;background:#fff"><svg width="34" height="24" viewBox="0 0 34 24" style="position:absolute;left:0;top:0"><path d="M6 15.3L11 20.2L23.2 6.6" fill="none" stroke="#5b14c8" stroke-width="2.4"/></svg></div>
<div class="g" style="left:1px;top:625px;width:17px;height:25px;background:#f2f2f2"></div>
<div class="g" style="left:18px;top:625px;width:80px;height:25px;background:#eef3e8"><span>毕业学校</span></div>
<div class="g" style="left:98px;top:625px;width:98px;height:25px;background:#f5ffff"><span></span></div>
<div class="g" style="left:196px;top:625px;width:35px;height:25px;background:#f5ffff"><svg width="34" height="24" viewBox="0 0 34 24" style="position:absolute;left:0;top:0"><path d="M6 15.3L11 20.2L23.2 6.6" fill="none" stroke="#5b14c8" stroke-width="2.4"/></svg></div>
<div class="g" style="left:1px;top:650px;width:17px;height:25px;background:#f2f2f2"></div>
<div class="g" style="left:18px;top:650px;width:80px;height:25px;background:#eef3e8"><span>所学专业</span></div>
<div class="g" style="left:98px;top:650px;width:98px;height:25px;background:#fff"><span></span></div>
<div class="g" style="left:196px;top:650px;width:35px;height:25px;background:#fff"><svg width="34" height="24" viewBox="0 0 34 24" style="position:absolute;left:0;top:0"><path d="M6 15.3L11 20.2L23.2 6.6" fill="none" stroke="#5b14c8" stroke-width="2.4"/></svg></div>
<div class="g" style="left:1px;top:675px;width:17px;height:25px;background:#f2f2f2"></div>
<div class="g" style="left:18px;top:675px;width:80px;height:25px;background:#eef3e8"><span>毕业日期</span></div>
<div class="g" style="left:98px;top:675px;width:98px;height:25px;background:#f5ffff"><span></span></div>
<div class="g" style="left:196px;top:675px;width:35px;height:25px;background:#f5ffff"><svg width="34" height="24" viewBox="0 0 34 24" style="position:absolute;left:0;top:0"><path d="M6 15.3L11 20.2L23.2 6.6" fill="none" stroke="#5b14c8" stroke-width="2.4"/></svg></div>
<div class="g" style="left:1px;top:700px;width:17px;height:25px;background:#f2f2f2"></div>
<div class="g" style="left:18px;top:700px;width:80px;height:25px;background:#eef3e8"><span>合同开始日期</span></div>
<div class="g" style="left:98px;top:700px;width:98px;height:25px;background:#fff"><span></span></div>
<div class="g" style="left:196px;top:700px;width:35px;height:25px;background:#fff"><svg width="34" height="24" viewBox="0 0 34 24" style="position:absolute;left:0;top:0"><path d="M6 15.3L11 20.2L23.2 6.6" fill="none" stroke="#5b14c8" stroke-width="2.4"/></svg></div>
<div class="g" style="left:1px;top:725px;width:17px;height:25px;background:#f2f2f2"></div>
<div class="g" style="left:18px;top:725px;width:80px;height:25px;background:#eef3e8"><span>合同终止日期</span></div>
<div class="g" style="left:98px;top:725px;width:98px;height:25px;background:#f5ffff"><span></span></div>
<div class="g" style="left:196px;top:725px;width:35px;height:25px;background:#f5ffff"><svg width="34" height="24" viewBox="0 0 34 24" style="position:absolute;left:0;top:0"><path d="M6 15.3L11 20.2L23.2 6.6" fill="none" stroke="#5b14c8" stroke-width="2.4"/></svg></div>
<div class="g" style="left:1px;top:750px;width:17px;height:25px;background:#f2f2f2"></div>
<div class="g" style="left:18px;top:750px;width:80px;height:25px;background:#eef3e8"><span>银行帐号</span></div>
<div class="g" style="left:98px;top:750px;width:98px;height:25px;background:#fff"><span></span></div>
<div class="g" style="left:196px;top:750px;width:35px;height:25px;background:#fff"><svg width="34" height="24" viewBox="0 0 34 24" style="position:absolute;left:0;top:0"><path d="M7.5 6.3L20 18.7M20 6.3L7.5 18.7" fill="none" stroke="#c8460e" stroke-width="2.4"/></svg></div>
<div class="g" style="left:1px;top:775px;width:17px;height:25px;background:#f2f2f2"></div>
<div class="g" style="left:18px;top:775px;width:80px;height:25px;background:#eef3e8"><span>紧急联系电话</span></div>
<div class="g" style="left:98px;top:775px;width:98px;height:25px;background:#f5ffff"><span></span></div>
<div class="g" style="left:196px;top:775px;width:35px;height:25px;background:#f5ffff"><svg width="34" height="24" viewBox="0 0 34 24" style="position:absolute;left:0;top:0"><path d="M7.5 6.3L20 18.7M20 6.3L7.5 18.7" fill="none" stroke="#c8460e" stroke-width="2.4"/></svg></div>
<div class="g" style="left:1px;top:800px;width:17px;height:25px;background:#f2f2f2"></div>
<div class="g" style="left:18px;top:800px;width:80px;height:25px;background:#eef3e8"><span>联系人</span></div>
<div class="g" style="left:98px;top:800px;width:98px;height:25px;background:#fff"><span></span></div>
<div class="g" style="left:196px;top:800px;width:35px;height:25px;background:#fff"><svg width="34" height="24" viewBox="0 0 34 24" style="position:absolute;left:0;top:0"><path d="M7.5 6.3L20 18.7M20 6.3L7.5 18.7" fill="none" stroke="#c8460e" stroke-width="2.4"/></svg></div>
<div class="g" style="left:1px;top:825px;width:17px;height:25px;background:#f2f2f2"></div>
<div class="g" style="left:18px;top:825px;width:80px;height:25px;background:#eef3e8"><span><i>qq</i>帐号</span></div>
<div class="g" style="left:98px;top:825px;width:98px;height:25px;background:#f5ffff"><span></span></div>
<div class="g" style="left:196px;top:825px;width:35px;height:25px;background:#f5ffff"><svg width="34" height="24" viewBox="0 0 34 24" style="position:absolute;left:0;top:0"><path d="M7.5 6.3L20 18.7M20 6.3L7.5 18.7" fill="none" stroke="#c8460e" stroke-width="2.4"/></svg></div>
</div>
<div class="b" style="left:382px;top:406px;width:1px;height:839px;background:#fff"></div>
<div class="b" style="left:143px;top:1244px;width:240px;height:1px;background:#fff"></div>
<div class="b" style="left:143px;top:1245px;width:240px;height:16px;background:#f0f0f0"></div>
<div class="b" style="left:160px;top:1252px;width:17px;height:2px;background:#8a8a8a;border-radius:1px"></div>
<div class="b" style="left:390px;top:423px;width:2px;height:17px;background:#808080"></div>
<div class="b" style="left:399px;top:309px;width:3px;height:952px;background:#a3c6ee"></div>
<div class="b" style="left:399px;top:309px;width:1000px;height:1px;background:#a9c9ec"></div>
<div class="b" style="left:402px;top:1171px;width:1000px;height:1px;background:#a9c9ec"></div>
<div class="b" style="left:402px;top:1172px;width:1000px;height:89px;background:#fff"></div>
<div class="t" style="left:409px;top:312px;color:#333;letter-spacing:.9px">准备导入的数据</div>
<div class="b" style="left:540px;top:313px;width:88px;height:22px;background:#e5f1fb;border:1px solid #cfe4f7;border-radius:3px"></div>
<div class="t" style="left:548px;top:317px;color:#0534b0;">生成导入模板</div>
<div class="t" style="left:645.5px;top:317px;color:#0534b0;">清空数据</div>
<div class="t" style="left:717px;top:317px;color:#0534b0;">检查字典日期</div>
<div class="t" style="left:813px;top:317px;color:#0534b0;">检查主键</div>
<div class="t" style="left:880px;top:317px;color:#0534b0;">检查长度</div>
<div class="t" style="left:958px;top:317px;color:#0534b0;">保存数据</div>
<div class="t" style="left:717px;top:340px;color:#0534b0;">去掉异常数据</div>
<div class="t" style="left:813px;top:340px;color:#0534b0;">去掉重复</div>
<div class="b" id="ptab" style="left:402px;top:361px;width:918px;height:50px;overflow:hidden;background:#a3cba3">
<div class="g c" style="left:1px;top:1px;width:49px;height:24px;background:#f5e6ee;color:#000090"><span><i>-</i></span></div>
<div class="g" style="left:1px;top:25px;width:49px;height:25px;background:#f2f2f2"></div>
<div class="g c" style="left:50px;top:1px;width:81px;height:24px;background:#f2f2f2;color:#000090"><span>部门</span></div>
<div class="g" style="left:50px;top:25px;width:81px;height:25px;background:#5566ee"></div>
<div class="g c" style="left:131px;top:1px;width:86px;height:24px;background:#f2f2f2;color:#000090"><span>工号</span></div>
<div class="g" style="left:131px;top:25px;width:86px;height:25px;background:#bffddd"></div>
<div class="g c" style="left:217px;top:1px;width:101px;height:24px;background:#f2f2f2;color:#000090"><span>姓名</span></div>
<div class="g" style="left:217px;top:25px;width:101px;height:25px;background:#bffddd"></div>
<div class="g c" style="left:318px;top:1px;width:97px;height:24px;background:#f2f2f2;color:#000090"><span>状态</span></div>
<div class="g" style="left:318px;top:25px;width:97px;height:25px;background:#bffddd"></div>
<div class="g c" style="left:415px;top:1px;width:64px;height:24px;background:#f2f2f2;color:#000090"><span>性别</span></div>
<div class="g" style="left:415px;top:25px;width:64px;height:25px;background:#bffddd"></div>
<div class="g c" style="left:479px;top:1px;width:64px;height:24px;background:#f2f2f2;color:#000090"><span>出生日期</span></div>
<div class="g" style="left:479px;top:25px;width:64px;height:25px;background:#bffddd"></div>
<div class="g c" style="left:543px;top:1px;width:64px;height:24px;background:#f2f2f2;color:#000090"><span>考勤卡号</span></div>
<div class="g" style="left:543px;top:25px;width:64px;height:25px;background:#bffddd"></div>
<div class="g c" style="left:607px;top:1px;width:64px;height:24px;background:#f2f2f2;color:#000090"><span>电话</span></div>
<div class="g" style="left:607px;top:25px;width:64px;height:25px;background:#bffddd"></div>
<div class="g c" style="left:671px;top:1px;width:64px;height:24px;background:#f2f2f2;color:#000090"><span>手机</span></div>
<div class="g" style="left:671px;top:25px;width:64px;height:25px;background:#bffddd"></div>
<div class="g c" style="left:735px;top:1px;width:64px;height:24px;background:#f2f2f2;color:#000090"><span><i>email</i></span></div>
<div class="g" style="left:735px;top:25px;width:64px;height:25px;background:#bffddd"></div>
<div class="g c" style="left:799px;top:1px;width:64px;height:24px;background:#f2f2f2;color:#000090"><span>岗位</span></div>
<div class="g" style="left:799px;top:25px;width:64px;height:25px;background:#bffddd"></div>
<div class="g c" style="left:863px;top:1px;width:64px;height:24px;background:#f2f2f2;color:#000090"><span>上岗时间</span></div>
<div class="g" style="left:863px;top:25px;width:64px;height:25px;background:#bffddd"></div>
</div>
<div class="b" style="left:939px;top:305px;width:94px;height:37px;border:3px solid #f83538"></div>
<div class="b" style="left:818px;top:452px;width:501px;height:210px;background:#616161;border-radius:3px"></div>
<svg class="b" style="left:812px;top:463px" width="7" height="12" viewBox="0 0 7 12"><path d="M7 0V12L1 6Z" fill="#616161"/></svg>
<div class="b" style="left:789px;top:459px;width:20px;height:20px;border-radius:50%;background:#f83538;color:#fff;font:12.5px/20px 'Liberation Sans',sans-serif;text-align:center">1</div>
<div class="b" style="left:824px;top:459.5px;width:490px;letter-spacing:.02px;color:#fff;font:16px/22px 'Liberation Sans','Noto Sans CJK SC',sans-serif;white-space:pre-wrap">主要是针对保存数据前， 和保存数据后的处理函数
类似单据保存的脚本

save_before
save_after

可以检测导入的数据是否合格，防止导入或修改不允许调整的字段内容。</div>
<svg class="b" style="left:860px;top:340px" width="110" height="130" viewBox="860 340 110 130"><path d="M950 348.8L934 359.3L938.6 357.6L877 461L878.6 462L945 361.8L948 367.5Z" fill="#f83538"/></svg>
</body></html>
